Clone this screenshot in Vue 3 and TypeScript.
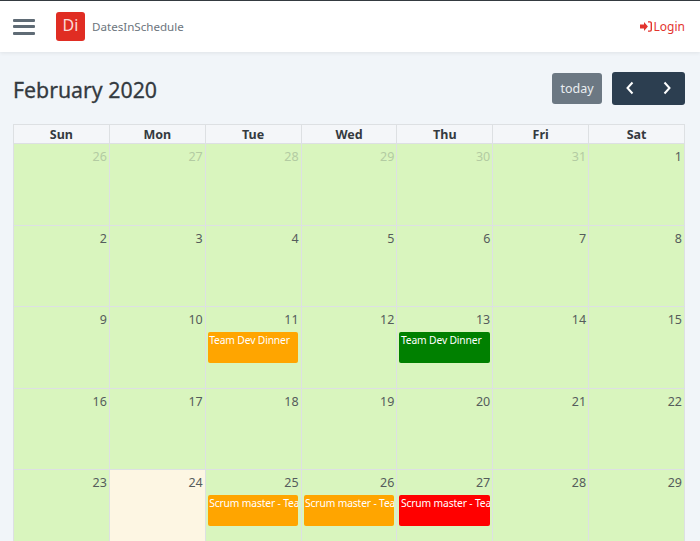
<script setup lang="ts">
interface Ev { title: string; color: string }
interface Day { n: number; other?: boolean; today?: boolean; ev?: Ev }
const heads = ['Sun', 'Mon', 'Tue', 'Wed', 'Thu', 'Fri', 'Sat']
const days: Day[] = [
  { n: 26, other: true }, { n: 27, other: true }, { n: 28, other: true }, { n: 29, other: true }, { n: 30, other: true }, { n: 31, other: true }, { n: 1 },
  { n: 2 }, { n: 3 }, { n: 4 }, { n: 5 }, { n: 6 }, { n: 7 }, { n: 8 },
  { n: 9 }, { n: 10 }, { n: 11, ev: { title: 'Team Dev Dinner', color: 'orange' } }, { n: 12 }, { n: 13, ev: { title: 'Team Dev Dinner', color: 'green' } }, { n: 14 }, { n: 15 },
  { n: 16 }, { n: 17 }, { n: 18 }, { n: 19 }, { n: 20 }, { n: 21 }, { n: 22 },
  { n: 23 }, { n: 24, today: true }, { n: 25, ev: { title: 'Scrum master - Tea', color: 'orange' } }, { n: 26, ev: { title: 'Scrum master - Tea', color: 'orange' } }, { n: 27, ev: { title: 'Scrum master - Tea', color: 'red' } }, { n: 28 }, { n: 29 },
]
</script>

<template>
  <div class="page">
    <header class="nav">
      <button class="burger" aria-label="menu"><span></span><span></span><span></span></button>
      <div class="logo">Di</div>
      <div class="brand">DatesInSchedule</div>
      <a class="login">
        <svg width="12" height="11" viewBox="0 0 12 11">
          <path d="M0 3.6h4V1l3.900 4.500L4 10V7.400H0z" fill="#e3342f" />
          <path d="M8 .9h2a1.300 1.300 0 0 1 1.300 1.300v6.600A1.300 1.300 0 0 1 10 10.100H8" fill="none" stroke="#e3342f" stroke-width="1.400" />
        </svg>
        Login
      </a>
    </header>
    <main class="main">
      <div class="toolbar">
        <h2 class="title">February 2020</h2>
        <button class="today">today</button>
        <div class="arrows">
          <button class="arrow" aria-label="prev">
            <svg width="10" height="14" viewBox="0 0 10 14"><path d="M7.500 1.500 2.500 7l5 5.500" fill="none" stroke="#fff" stroke-width="2" /></svg>
          </button>
          <button class="arrow" aria-label="next">
            <svg width="10" height="14" viewBox="0 0 10 14"><path d="M2.500 1.500 7.500 7l-5 5.500" fill="none" stroke="#fff" stroke-width="2" /></svg>
          </button>
        </div>
      </div>
      <div class="cal">
        <div class="head" v-for="h in heads" :key="h">{{ h }}</div>
        <div
          v-for="(d, i) in days"
          :key="i"
          class="cell"
          :class="{ other: d.other, now: d.today }"
        >
          <div class="num">{{ d.n }}</div>
          <div v-if="d.ev" class="ev" :style="{ background: d.ev.color }">{{ d.ev.title }}</div>
        </div>
      </div>
    </main>
  </div>
</template>

<style>
html, body { margin: 0; overflow: hidden; }
</style>

<style scoped>
.page {
  width: 700px;
  height: 541px;
  overflow: hidden;
  background: #f1f5f9;
  font-family: "Noto Sans", "Open Sans", sans-serif;
  color: #495057;
}
.nav {
  height: 51px;
  box-sizing: content-box;
  border-top: 1px solid #343a40;
  background: #fff;
  display: flex;
  align-items: center;
  padding: 0 15px 0 13px;
  box-shadow: 0 1px 4px rgba(0, 0, 0, .08);
  position: relative;
}
.burger {
  width: 22px;
  padding: 0;
  border: 0;
  background: none;
  display: flex;
  flex-direction: column;
  gap: 3.500px;
  margin-right: 21px;
}
.burger span { display: block; height: 3px; border-radius: 1px; background: #5f6b75; }
.logo {
  width: 29px;
  height: 29px;
  border-radius: 3px;
  background: #e02d23;
  color: #fbdcd9;
  font-size: 16px;
  line-height: 27px;
  text-align: center;
  margin-right: 7px;
}
.brand { font-size: 11.600px; color: #6c757d; }
.login {
  margin-left: auto;
  color: #e3342f;
  font-size: 12px;
  display: flex;
  align-items: center;
  gap: 2px;
}
.main { padding: 0 15px 0 13px; }
.toolbar {
  height: 72px;
  display: flex;
  align-items: center;
}
.title {
  margin: 0 auto 0 0;
  font-size: 21.300px;
  font-weight: 400;
  color: #343a40;
  padding-top: 2px;
  -webkit-text-stroke: .3px #343a40;
}
.today {
  width: 50px;
  height: 31px;
  border: 0;
  border-radius: 3px;
  background: #6c7883;
  color: #e9edf0;
  font: 12.500px "Noto Sans", "Open Sans", sans-serif;
  padding: 0;
  margin-right: 10px;
  margin-top: 1px;
}
.arrows {
  display: flex;
  background: #2c3e50;
  border-radius: 3px;
  height: 33px;
}
.arrow {
  width: 36.500px;
  border: 0;
  background: none;
  padding: 0;
  display: flex;
  align-items: center;
  justify-content: center;
}
.cal {
  display: grid;
  grid-template-columns: repeat(7, 1fr);
  grid-template-rows: 19px repeat(5, 81.500px);
  border-top: 1px solid #dde0e3;
  border-left: 1px solid #dde0e3;
  box-sizing: border-box;
  width: 672px;
}
.head {
  background: #f4f6f9;
  border-right: 1px solid #dde0e3;
  border-bottom: 1px solid #dde0e3;
  font-size: 12.500px;
  font-weight: 700;
  text-align: center;
  line-height: 20px;
  color: #343a40;
  box-sizing: border-box;
}
.cell {
  background: #d9f5be;
  border-right: 1px solid #dde0e3;
  border-bottom: 1px solid #dde0e3;
  box-sizing: border-box;
  min-width: 0;
  padding: 0 1px;
}
.cell.now { background: #fdf6e3; }
.num {
  text-align: right;
  font-size: 12.500px;
  line-height: 17px;
  padding: 4px 1px 4px 0;
  color: #555c5c;
}
.other .num { color: #b3cba2; }
.ev {
  margin: 0 0 0 1px;
  height: 30.500px;
  border-radius: 2px;
  width: 90.500px;
  color: #fff;
  font-size: 10.300px;
  letter-spacing: -.15px;
  line-height: 15px;
  padding: 1px 2px 1px 1.500px;
  box-sizing: border-box;
  white-space: nowrap;
  overflow: hidden;
}
</style>
